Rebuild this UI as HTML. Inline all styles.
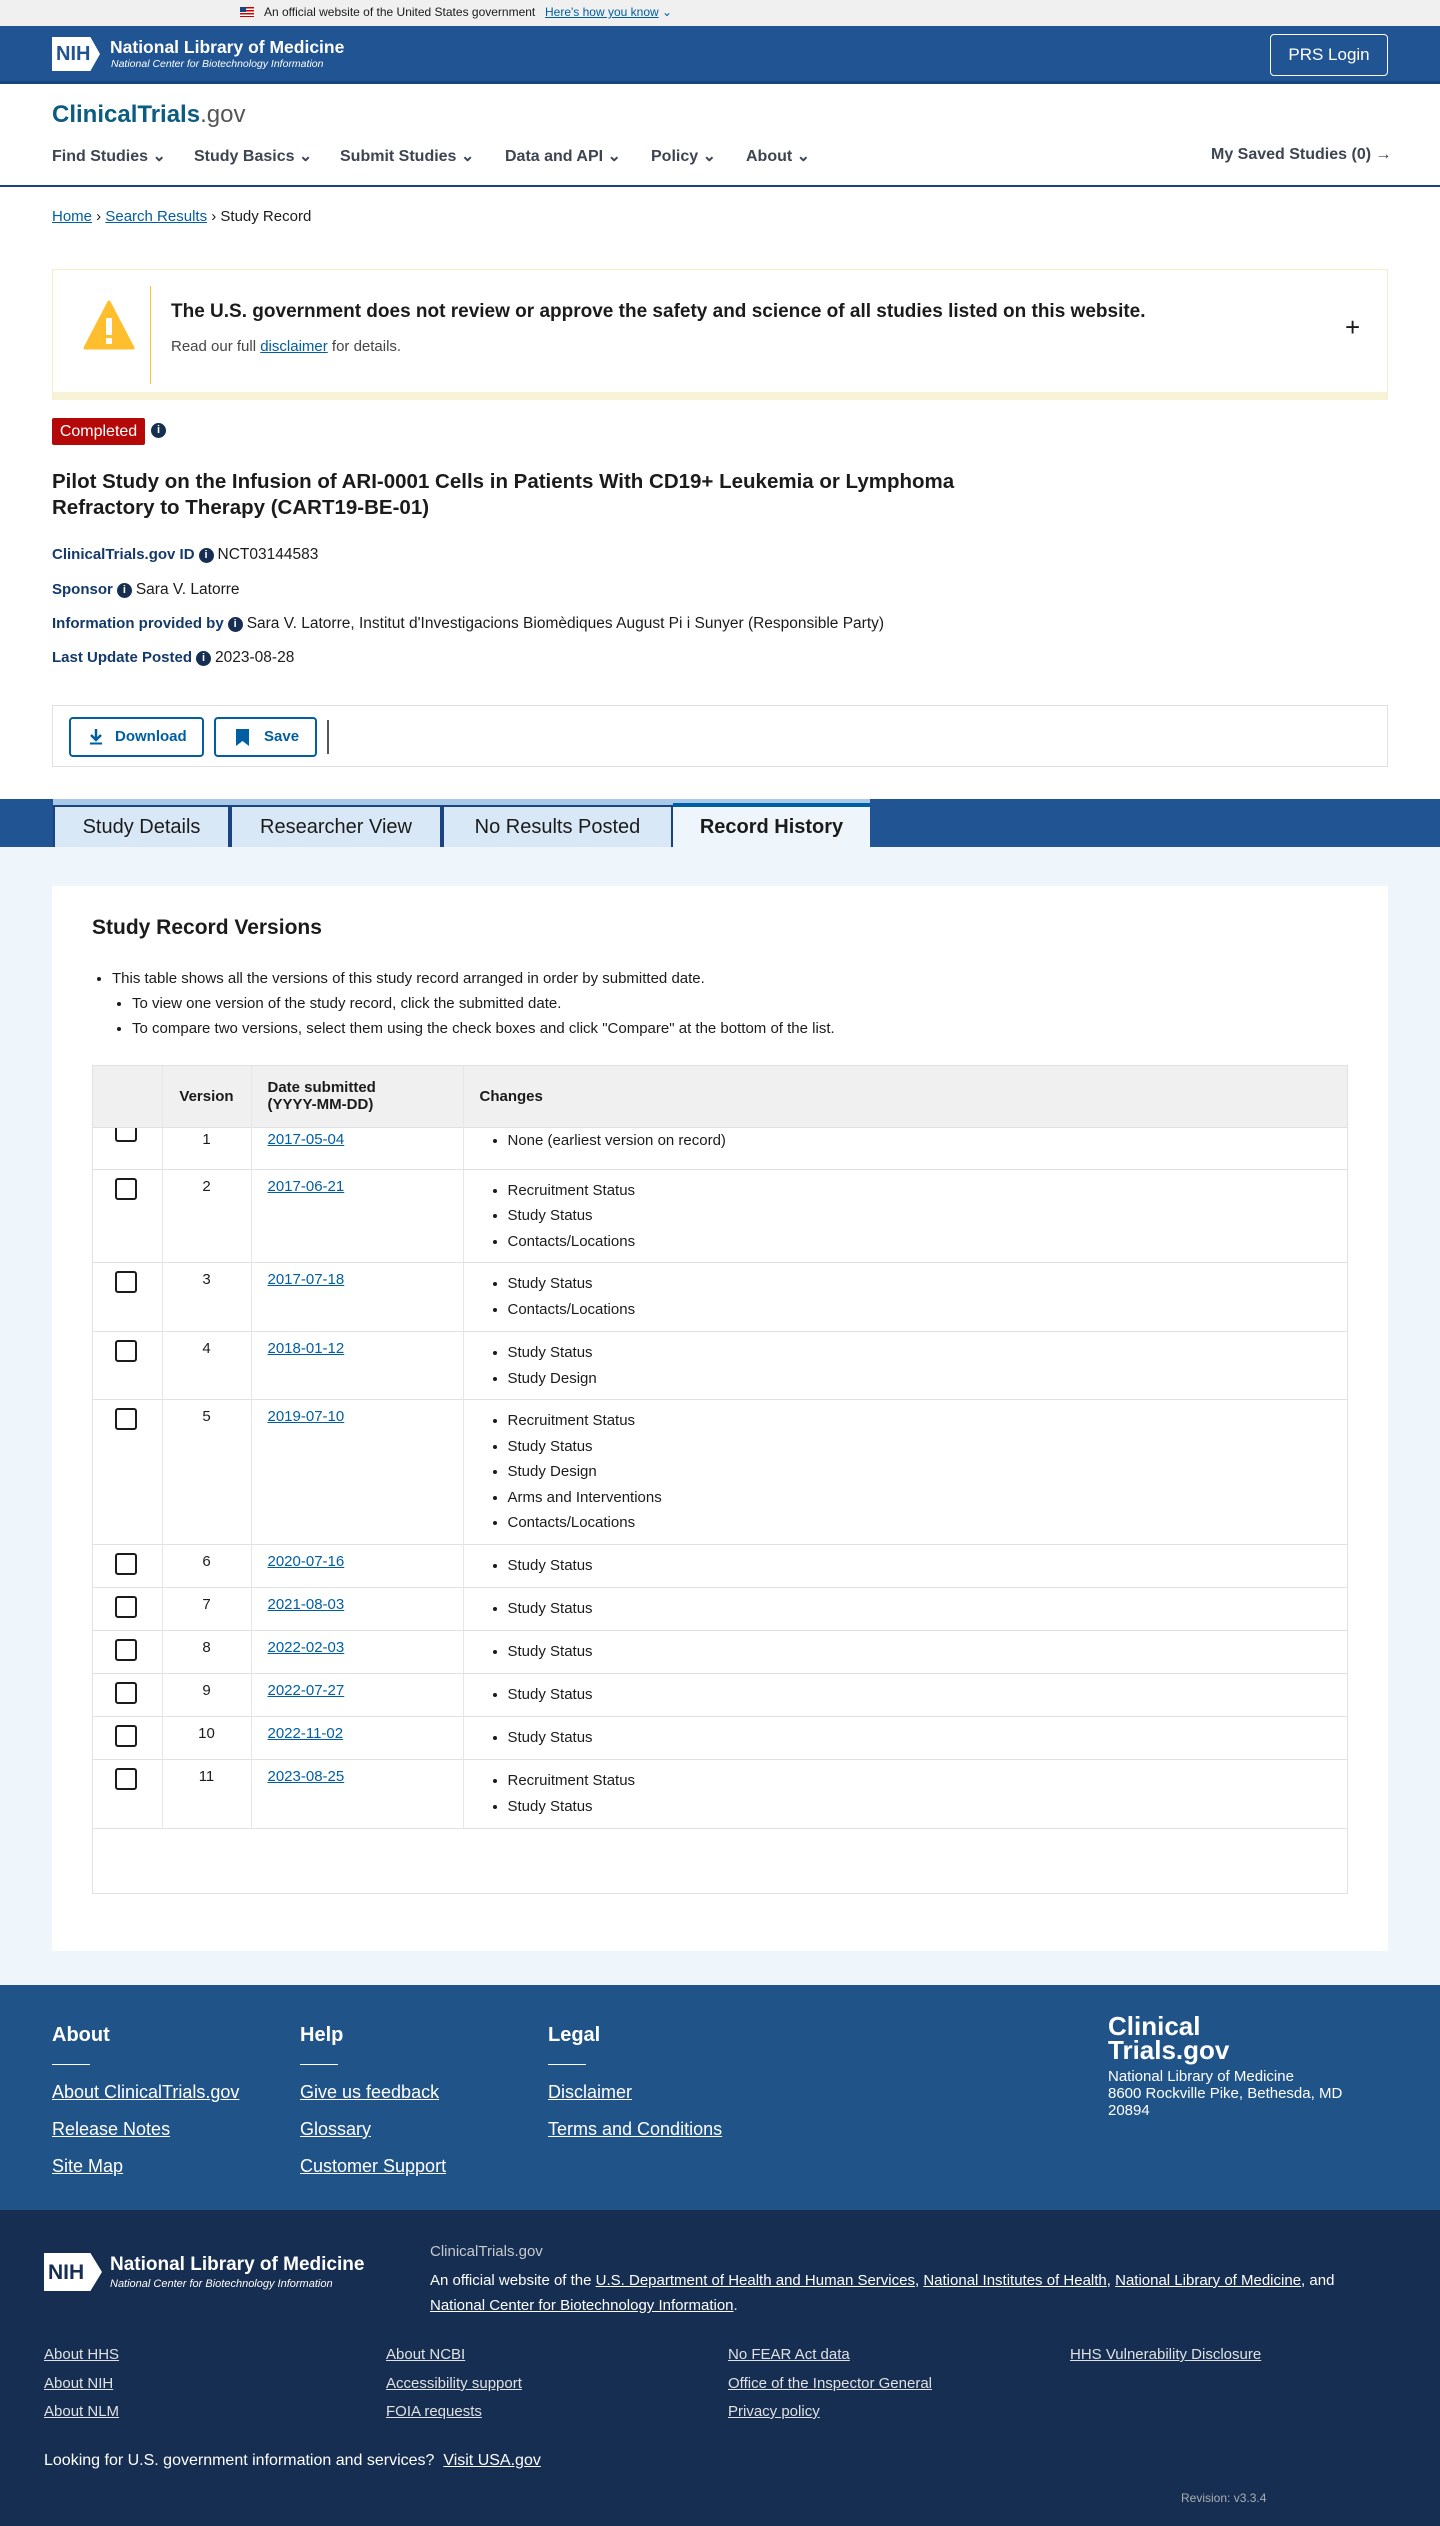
<!DOCTYPE html>
<html><head><meta charset="utf-8">
<style>
*{box-sizing:border-box;margin:0;padding:0}
body{width:1440px;height:2526px;position:relative;font-family:"Liberation Sans",Arial,sans-serif;color:#1b1b1b;font-size:16px;background:#fff;overflow:hidden}
.a{position:absolute}
a{color:#005ea2;text-decoration:underline}
.nav span{position:absolute;top:146px;font-size:16px;font-weight:bold;color:#3d4551}
.lbl{color:#14396a;font-weight:bold;font-size:15px}
.ic{display:inline-block;width:15px;height:15px;border-radius:50%;background:#162e51;color:#fff;font-size:11px;font-weight:bold;text-align:center;line-height:15px;vertical-align:1px;margin:0 4px}
.row{position:absolute;left:52px;font-size:15.5px}
.tab{position:absolute;top:805px;height:42px;background:#d9e8f6;border:2px solid #1a4480;border-bottom:none;font-size:20px;line-height:40px;text-align:center;color:#1b1b1b}
table{border-collapse:collapse;width:1256px;font-size:15px}
td,th{border-right:1px solid #e6e6e6;vertical-align:top;padding:8px 16px}
tr{border-bottom:1px solid #dfe1e2}
th{background:#f0f0f0;text-align:left;font-weight:bold;vertical-align:middle;height:61px}
td ul{list-style:disc;padding-left:28px}
td li{line-height:25.5px}
.cb{display:inline-block;width:22px;height:22px;border:2px solid #1b1b1b;border-radius:3px;margin-left:6px}
.fl a{color:#fff;font-size:18px;position:absolute}
.dl a{color:#dfe1e2;font-size:15px;position:absolute}
</style></head><body>
<div class="a" style="left:0;top:0;width:1440px;height:26px;background:#f0f0f0;font-size:12px">
 <div class="a" style="left:240px;top:7px;width:14px;height:10px;background:repeating-linear-gradient(#c00 0 1.5px,#fff 1.5px 3px)"><div style="width:6px;height:5px;background:#1a4480"></div></div>
 <span class="a" style="left:264px;top:5px">An official website of the United States government</span>
 <a class="a" style="left:545px;top:5px">Here's how you know</a><span class="a" style="left:662px;top:5px;color:#005ea2">⌄</span>
</div>
<div class="a" style="left:0;top:26px;width:1440px;height:58px;background:#205493;border-bottom:3px solid #1a4480"></div>
<div class="a" style="left:52px;top:37px;width:48px;height:34px;background:#fff;clip-path:polygon(0 0,80% 0,100% 50%,80% 100%,0 100%)"><span style="color:#205493;font-weight:bold;font-size:20px;position:absolute;left:4px;top:6px">NIH</span></div>
<div class="a" style="left:110px;top:37px;color:#fff;font-size:17.5px;font-weight:bold">National Library of Medicine</div>
<div class="a" style="left:111px;top:58px;color:#fff;font-size:10.5px;font-style:italic">National Center for Biotechnology Information</div>
<div class="a" style="left:1270px;top:34px;width:118px;height:42px;border:1px solid #fff;border-radius:4px;color:#fff;font-size:17px;text-align:center;line-height:40px">PRS Login</div>
<div class="a" style="left:52px;top:101px;font-size:24px;font-weight:bold;color:#0b5c80">ClinicalTrials<span style="color:#555;font-weight:normal">.gov</span></div>
<div class="nav">
<span style="left:52px">Find Studies ⌄</span><span style="left:194px">Study Basics ⌄</span><span style="left:340px">Submit Studies ⌄</span><span style="left:505px">Data and API ⌄</span><span style="left:651px">Policy ⌄</span><span style="left:746px">About ⌄</span><span style="left:1211px">My Saved Studies (0) →</span>
</div>
<div class="a" style="left:0;top:185px;width:1440px;height:2px;background:#1a4480"></div>
<div class="a" style="left:52px;top:208px;font-size:15px"><a>Home</a> › <a>Search Results</a> › Study Record</div>
<div class="a" style="left:52px;top:269px;width:1336px;height:131px;border:1px solid #f3efc8;border-bottom:8px solid #f8f3d6;background:#fff">
 <svg class="a" style="left:30px;top:30px" width="52" height="52" viewBox="0 0 52 52"><path d="M26 2 L50 48 L2 48 Z" fill="#ffbe2e" stroke="#ffbe2e" stroke-width="3" stroke-linejoin="round"/><rect x="23" y="18" width="6" height="17" fill="#fff"/><rect x="23" y="38" width="6" height="6" fill="#fff"/></svg>
 <div class="a" style="left:97px;top:16px;width:1px;height:98px;background:#ffbe2e"></div>
 <div class="a" style="left:118px;top:31px;font-size:19px;font-weight:bold">The U.S. government does not review or approve the safety and science of all studies listed on this website.</div>
 <div class="a" style="left:118px;top:68px;font-size:15px;color:#454545">Read our full <a>disclaimer</a> for details.</div>
 <div class="a" style="left:1292px;top:42px;font-size:26px">+</div>
</div>
<div class="a" style="left:52px;top:418px;width:93px;height:27px;background:#b50909;border-radius:2px;color:#fff;font-size:16px;text-align:center;line-height:27px">Completed</div>
<span class="ic a" style="left:147px;top:423px">i</span>
<div class="a" style="left:52px;top:469px;font-size:20.5px;font-weight:bold;line-height:26px;width:1000px;color:#1b1b1b">Pilot Study on the Infusion of ARI-0001 Cells in Patients With CD19+ Leukemia or Lymphoma<br>Refractory to Therapy (CART19-BE-01)</div>
<div class="row" style="top:546px"><span class="lbl">ClinicalTrials.gov ID</span><span class="ic">i</span>NCT03144583</div>
<div class="row" style="top:581px"><span class="lbl">Sponsor</span><span class="ic">i</span>Sara V. Latorre</div>
<div class="row" style="top:615px"><span class="lbl">Information provided by</span><span class="ic">i</span>Sara V. Latorre, Institut d'Investigacions Biomèdiques August Pi i Sunyer (Responsible Party)</div>
<div class="row" style="top:649px"><span class="lbl">Last Update Posted</span><span class="ic">i</span>2023-08-28</div>
<div class="a" style="left:52px;top:705px;width:1336px;height:62px;border:1px solid #dfe1e2">
 <div class="a" style="left:16px;top:11px;width:135px;height:40px;border:2px solid #005ea2;border-radius:4px;color:#005ea2;font-weight:bold;font-size:15px;line-height:36px;padding-left:44px">Download<svg class="a" style="left:18px;top:10px" width="14" height="16" viewBox="0 0 14 16"><path d="M7 0v10M2 6l5 5 5-5" stroke="#005ea2" stroke-width="2.5" fill="none"/><rect x="1" y="13.5" width="12" height="2" fill="#005ea2"/></svg></div>
 <div class="a" style="left:161px;top:11px;width:103px;height:40px;border:2px solid #005ea2;border-radius:4px;color:#005ea2;font-weight:bold;font-size:15px;line-height:36px;padding-left:48px">Save<svg class="a" style="left:20px;top:10px" width="13" height="17" viewBox="0 0 13 17"><path d="M0 0h13v17l-6.5-5L0 17z" fill="#005ea2"/></svg></div>
 <div class="a" style="left:274px;top:14px;width:2px;height:34px;background:#555"></div>
</div>
<div class="a" style="left:0;top:799px;width:1440px;height:48px;background:#205493"></div>
<div class="a" style="left:53px;top:799px;width:817px;height:6px;background:#a9c9ea"></div>
<div class="a" style="left:0;top:847px;width:1440px;height:1138px;background:#eff6fb"></div>
<div class="tab" style="left:53px;width:177px">Study Details</div>
<div class="tab" style="left:230px;width:212px">Researcher View</div>
<div class="tab" style="left:442px;width:231px">No Results Posted</div>
<div class="a" style="left:673px;top:803px;width:197px;height:45px;background:#eff6fb;border-top:4px solid #005ea2;font-size:20px;font-weight:bold;text-align:center;line-height:40px">Record History</div>
<div class="a" style="left:52px;top:886px;width:1336px;height:1065px;background:#fff">
 <div class="a" style="left:40px;top:30px;font-size:21px;font-weight:bold">Study Record Versions</div>
 <ul class="a" style="left:60px;top:80px;font-size:15px;line-height:25px;list-style:disc">
  <li>This table shows all the versions of this study record arranged in order by submitted date.
   <ul style="padding-left:20px;list-style:disc"><li>To view one version of the study record, click the submitted date.</li><li>To compare two versions, select them using the check boxes and click "Compare" at the bottom of the list.</li></ul></li>
 </ul>
 <div class="a" style="left:40px;top:179px;width:1256px;height:829px;border:1px solid #dfe1e2;overflow:hidden">
 <table>
 <colgroup><col style="width:69px"><col style="width:89px"><col style="width:212px"><col></colgroup>
 <tr><th></th><th style="text-align:center">Version</th><th>Date submitted<br>(YYYY-MM-DD)</th><th>Changes</th></tr>
 <tr style="height:42px"><td style="padding-top:0"><span class="cb" style="height:14px;border-top:none;border-radius:0 0 3px 3px"></span></td><td style="text-align:center;padding-top:3px">1</td><td style="padding-top:3px"><a>2017-05-04</a></td><td style="padding-top:0"><ul><li>None (earliest version on record)</li></ul></td></tr>
 <tr style="height:92px"><td><span class="cb"></span></td><td style="text-align:center">2</td><td><a>2017-06-21</a></td><td><ul><li>Recruitment Status</li><li>Study Status</li><li>Contacts/Locations</li></ul></td></tr>
 <tr style="height:69px"><td><span class="cb"></span></td><td style="text-align:center">3</td><td><a>2017-07-18</a></td><td><ul><li>Study Status</li><li>Contacts/Locations</li></ul></td></tr>
 <tr style="height:66px"><td><span class="cb"></span></td><td style="text-align:center">4</td><td><a>2018-01-12</a></td><td><ul><li>Study Status</li><li>Study Design</li></ul></td></tr>
 <tr style="height:145px"><td><span class="cb"></span></td><td style="text-align:center">5</td><td><a>2019-07-10</a></td><td><ul><li>Recruitment Status</li><li>Study Status</li><li>Study Design</li><li>Arms and Interventions</li><li>Contacts/Locations</li></ul></td></tr>
 <tr style="height:42px"><td><span class="cb"></span></td><td style="text-align:center">6</td><td><a>2020-07-16</a></td><td><ul><li>Study Status</li></ul></td></tr>
 <tr style="height:42px"><td><span class="cb"></span></td><td style="text-align:center">7</td><td><a>2021-08-03</a></td><td><ul><li>Study Status</li></ul></td></tr>
 <tr style="height:42px"><td><span class="cb"></span></td><td style="text-align:center">8</td><td><a>2022-02-03</a></td><td><ul><li>Study Status</li></ul></td></tr>
 <tr style="height:42px"><td><span class="cb"></span></td><td style="text-align:center">9</td><td><a>2022-07-27</a></td><td><ul><li>Study Status</li></ul></td></tr>
 <tr style="height:42px"><td><span class="cb"></span></td><td style="text-align:center">10</td><td><a>2022-11-02</a></td><td><ul><li>Study Status</li></ul></td></tr>
 <tr style="height:69px"><td><span class="cb"></span></td><td style="text-align:center">11</td><td><a>2023-08-25</a></td><td><ul><li>Recruitment Status</li><li>Study Status</li></ul></td></tr>
 </table>
 </div>
</div>
<div class="a" style="left:0;top:1985px;width:1440px;height:225px;background:#205489"></div>
<div class="a" style="left:0;top:2210px;width:1440px;height:316px;background:#162e51"></div>
<div class="fl">
 <div class="a" style="left:52px;top:2024px;color:#fff;font-size:20px;font-weight:bold">About</div>
 <div class="a" style="left:300px;top:2024px;color:#fff;font-size:20px;font-weight:bold">Help</div>
 <div class="a" style="left:548px;top:2024px;color:#fff;font-size:20px;font-weight:bold">Legal</div>
 <div class="a" style="left:52px;top:2064px;width:38px;height:1px;background:#fff"></div>
 <div class="a" style="left:300px;top:2064px;width:38px;height:1px;background:#fff"></div>
 <div class="a" style="left:548px;top:2064px;width:38px;height:1px;background:#fff"></div>
 <a style="left:52px;top:2082px">About ClinicalTrials.gov</a><a style="left:52px;top:2119px">Release Notes</a><a style="left:52px;top:2156px">Site Map</a>
 <a style="left:300px;top:2082px">Give us feedback</a><a style="left:300px;top:2119px">Glossary</a><a style="left:300px;top:2156px">Customer Support</a>
 <a style="left:548px;top:2082px">Disclaimer</a><a style="left:548px;top:2119px">Terms and Conditions</a>
</div>
<div class="a" style="left:1108px;top:2014px;color:#fff;font-size:26px;font-weight:bold;line-height:24px">Clinical<br>Trials.gov</div>
<div class="a" style="left:1108px;top:2068px;color:#fff;font-size:15px;line-height:17px">National Library of Medicine<br>8600 Rockville Pike, Bethesda, MD<br>20894</div>
<div class="a" style="left:44px;top:2253px;width:58px;height:38px;background:#fff;clip-path:polygon(0 0,80% 0,100% 50%,80% 100%,0 100%)"><span style="color:#162e51;font-weight:bold;font-size:21px;position:absolute;left:4px;top:8px">NIH</span></div>
<div class="a" style="left:110px;top:2254px;color:#fff;font-size:19px;font-weight:bold">National Library of Medicine</div>
<div class="a" style="left:110px;top:2278px;color:#fff;font-size:11px;font-style:italic">National Center for Biotechnology Information</div>
<div class="a" style="left:430px;top:2243px;color:#c6cace;font-size:15px">ClinicalTrials.gov</div>
<div class="a" style="left:430px;top:2268px;color:#fff;font-size:15px;line-height:25px;width:930px">An official website of the <a style="color:#fff">U.S. Department of Health and Human Services</a>, <a style="color:#fff">National Institutes of Health</a>, <a style="color:#fff">National Library of Medicine</a>, and <a style="color:#fff">National Center for Biotechnology Information</a>.</div>
<div class="dl">
 <a style="left:44px;top:2346px">About HHS</a><a style="left:44px;top:2375px">About NIH</a><a style="left:44px;top:2403px">About NLM</a>
 <a style="left:386px;top:2346px">About NCBI</a><a style="left:386px;top:2375px">Accessibility support</a><a style="left:386px;top:2403px">FOIA requests</a>
 <a style="left:728px;top:2346px">No FEAR Act data</a><a style="left:728px;top:2375px">Office of the Inspector General</a><a style="left:728px;top:2403px">Privacy policy</a>
 <a style="left:1070px;top:2346px">HHS Vulnerability Disclosure</a>
</div>
<div class="a" style="left:44px;top:2452px;color:#fff;font-size:16px">Looking for U.S. government information and services? &nbsp;<a style="color:#fff">Visit USA.gov</a></div>
<div class="a" style="left:1181px;top:2491px;color:#a9aeb1;font-size:12px">Revision: v3.3.4</div>
</body></html>
